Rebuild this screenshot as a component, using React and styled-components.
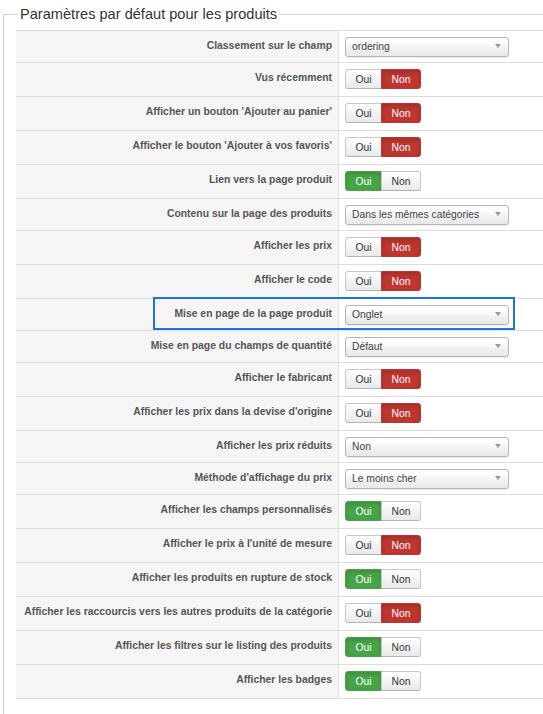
import React from "react";
import styled, { createGlobalStyle } from "styled-components";

const Global = createGlobalStyle`
  html, body { margin: 0; padding: 0; overflow: hidden; background: #fff; }
  body { font-family: "Liberation Sans", Arial, sans-serif; }
`;

const Fieldset = styled.fieldset`
  margin: 5px 0 0 3px;
  padding: 7px 12px 40px 12px;
  border: 1px solid #cfcfcf;
  width: 600px;
  min-width: 600px;
`;

const Legend = styled.legend`
  margin-left: 2px;
  padding: 0 2px;
  font-size: 14.6px;
  line-height: 18px;
  color: #333;
`;

const Table = styled.div`
  display: flex;
  flex-direction: column;
  border-bottom: 1px solid #ddd;
`;

const Row = styled.div`
  position: relative;
  display: grid;
  grid-template-columns: 323px 1fr;
  border-top: 1px solid #ddd;
`;

const KeyCell = styled.div`
  background: #f5f5f5;
  border-right: 1px solid #e4e4e4;
  padding: 6px 6px 0 0;
  text-align: right;
  font-size: 10.4px;
  font-weight: bold;
  line-height: 18px;
  color: #555;
  white-space: nowrap;
`;

const ValueCell = styled.div`
  padding: 6px 0 5px 6px;
  background: #fff;
`;

const Select = styled.div`
  position: relative;
  box-sizing: border-box;
  width: 164px;
  height: 20px;
  border: 1px solid #b5b5b5;
  border-radius: 3px;
  background: linear-gradient(#ffffff 20%, #f0f0f0 60%, #e8e8e8);
  box-shadow: 0 1px 1px rgba(0, 0, 0, 0.08);
  padding-left: 6px;
  font-size: 10.3px;
  line-height: 18px;
  color: #444;
`;

const Arrow = styled.span`
  position: absolute;
  right: 7px;
  top: 6px;
  width: 0;
  height: 0;
  border-left: 3px solid transparent;
  border-right: 3px solid transparent;
  border-top: 4px solid #999;
`;

const Toggle = styled.div`
  display: inline-flex;
  height: 20px;
  margin-bottom: 2px;
  vertical-align: top;
`;

const ToggleBtn = styled.span`
  box-sizing: border-box;
  display: flex;
  align-items: center;
  justify-content: center;
  width: ${(p) => p.$w}px;
  height: 20px;
  font-size: 10.3px;
  border: 1px solid ${(p) => (p.$active ? p.$color : "#c8c8c8")};
  border-bottom-color: ${(p) => (p.$active ? p.$color : "#b3b3b3")};
  background: ${(p) =>
    p.$active ? p.$color : "linear-gradient(#ffffff, #e9e9e9)"};
  color: ${(p) => (p.$active ? "#fff" : "#333")};
  box-shadow: ${(p) =>
    p.$active
      ? "inset 0 2px 4px rgba(0,0,0,0.15)"
      : "inset 0 1px 0 rgba(255,255,255,0.2)"};
  &:first-child {
    border-radius: 3px 0 0 3px;
  }
  &:last-child {
    border-radius: 0 3px 3px 0;
    margin-left: -1px;
  }
`;

const Highlight = styled.div`
  position: absolute;
  left: 137px;
  top: -2px;
  width: 362px;
  height: 33px;
  box-sizing: border-box;
  border: 2px solid #1a76dc;
  pointer-events: none;
`;

const rows = [
  ["Classement sur le champ", "select", "ordering"],
  ["Vus récemment", "toggle", false],
  ["Afficher un bouton 'Ajouter au panier'", "toggle", false],
  ["Afficher le bouton 'Ajouter à vos favoris'", "toggle", false],
  ["Lien vers la page produit", "toggle", true],
  ["Contenu sur la page des produits", "select", "Dans les mêmes catégories"],
  ["Afficher les prix", "toggle", false],
  ["Afficher le code", "toggle", false],
  ["Mise en page de la page produit", "select", "Onglet", true],
  ["Mise en page du champs de quantité", "select", "Défaut"],
  ["Afficher le fabricant", "toggle", false],
  ["Afficher les prix dans la devise d'origine", "toggle", false],
  ["Afficher les prix réduits", "select", "Non"],
  ["Méthode d'affichage du prix", "select", "Le moins cher"],
  ["Afficher les champs personnalisés", "toggle", true],
  ["Afficher le prix à l'unité de mesure", "toggle", false],
  ["Afficher les produits en rupture de stock", "toggle", true],
  ["Afficher les raccourcis vers les autres produits de la catégorie", "toggle", false],
  ["Afficher les filtres sur le listing des produits", "toggle", true],
  ["Afficher les badges", "toggle", true],
];

function YesNo({ yes }) {
  return (
    <Toggle>
      <ToggleBtn $w={37} $active={yes} $color="#47a447">
        Oui
      </ToggleBtn>
      <ToggleBtn $w={40} $active={!yes} $color="#bd362f">
        Non
      </ToggleBtn>
    </Toggle>
  );
}

export default function App() {
  return (
    <>
      <Global />
      <Fieldset>
        <Legend>Paramètres par défaut pour les produits</Legend>
        <Table>
          {rows.map(([label, kind, value, hl]) => (
            <Row key={label}>
              <KeyCell>{label}</KeyCell>
              <ValueCell>
                {kind === "select" ? (
                  <Select>
                    {value}
                    <Arrow />
                  </Select>
                ) : (
                  <YesNo yes={value} />
                )}
              </ValueCell>
              {hl && <Highlight />}
            </Row>
          ))}
        </Table>
      </Fieldset>
    </>
  );
}
